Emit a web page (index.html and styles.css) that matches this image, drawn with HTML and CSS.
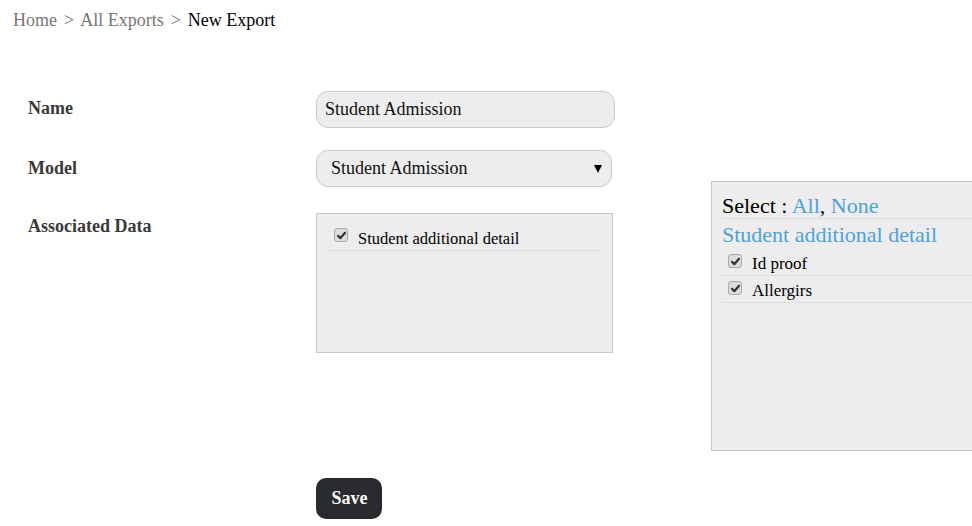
FILE: index.html
```html
<!DOCTYPE html>
<html lang="en">
<head>
<meta charset="utf-8">
<title>New Export</title>
<link rel="stylesheet" href="styles.css">
</head>
<body>
<div class="page">
  <nav class="breadcrumb">
    <a href="#" class="crumb-link">Home</a> <span class="sep">&gt;</span>
    <a href="#" class="crumb-link">All Exports</a> <span class="sep">&gt;</span>
    <span class="crumb-current">New Export</span>
  </nav>
  <div class="layout">
    <form class="export-form">
      <label class="field-label row-name" for="name">Name</label>
      <div class="field row-name">
        <input id="name" class="text-input" type="text" value="Student Admission">
      </div>

      <label class="field-label row-model" for="model">Model</label>
      <div class="field row-model">
        <span class="select-wrap">
          <select id="model" class="select-input">
            <option>Student Admission</option>
          </select>
        </span>
      </div>

      <span class="field-label row-assoc">Associated Data</span>
      <div class="field row-assoc">
        <div class="assoc-box">
          <div class="check-item">
            <span class="checkbox"><svg viewBox="0 0 13 13" width="13" height="13"><path d="M3 6.8 L5.3 9.2 L10 3.8" fill="none" stroke="#333" stroke-width="2.2" stroke-linecap="round" stroke-linejoin="round"/></svg></span>
            <span class="check-text">Student additional detail</span>
          </div>
        </div>
      </div>

      <div class="field row-save">
        <button type="button" class="save-btn">Save</button>
      </div>
    </form>

    <aside class="fields-panel">
      <div class="select-line">Select : <a href="#" class="blue-link">All</a>, <a href="#" class="blue-link">None</a></div>
      <div class="group-title">Student additional detail</div>
      <div class="panel-item first">
        <span class="checkbox"><svg viewBox="0 0 13 13" width="13" height="13"><path d="M3 6.8 L5.3 9.2 L10 3.8" fill="none" stroke="#333" stroke-width="2.2" stroke-linecap="round" stroke-linejoin="round"/></svg></span>
        <span class="check-text">Id proof</span>
      </div>
      <div class="panel-item">
        <span class="checkbox"><svg viewBox="0 0 13 13" width="13" height="13"><path d="M3 6.8 L5.3 9.2 L10 3.8" fill="none" stroke="#333" stroke-width="2.2" stroke-linecap="round" stroke-linejoin="round"/></svg></span>
        <span class="check-text">Allergirs</span>
      </div>
    </aside>
  </div>
</div>
</body>
</html>
```

FILE: styles.css
```css
html, body {
  margin: 0;
  padding: 0;
  background: #fff;
}

body {
  font-family: "Liberation Serif", "Times New Roman", serif;
  color: #000;
}

.page {
  width: 972px;
  height: 526px;
  overflow: hidden;
}

.breadcrumb {
  padding: 10px 13px 0;
  height: 31px;
  font-size: 18px;
  line-height: 21px;
  color: #777;
}

.crumb-link {
  color: #777;
  text-decoration: none;
}

.sep {
  color: #777;
  margin: 0 2.5px;
}

.crumb-current {
  color: #000;
}

.layout {
  display: flex;
  align-items: flex-start;
}

.export-form {
  width: 683px;
  flex: none;
  padding: 50px 0 0 28px;
  display: grid;
  grid-template-columns: 288px 300px;
  align-items: center;
}

.field-label {
  font-weight: bold;
  font-size: 18px;
  color: #3a3a3a;
  grid-column: 1;
}

.field {
  grid-column: 2;
}

.row-name.field-label { padding-bottom: 3px; }

.row-model { margin-top: 22px; }

.row-assoc { margin-top: 26px; }

.row-assoc.field-label {
  align-self: start;
  padding-top: 3px;
}

.row-save {
  margin-top: 125px;
}

.text-input {
  box-sizing: border-box;
  width: 299px;
  height: 37px;
  border: 1px solid #ccc;
  border-radius: 12px;
  background: #ededed;
  font-family: "Liberation Serif", "Times New Roman", serif;
  font-size: 18px;
  color: #111;
  padding: 0 8px;
  margin: 0;
  outline: none;
}

.select-wrap {
  position: relative;
  display: inline-block;
}

.select-wrap::after {
  content: "";
  position: absolute;
  right: 10px;
  top: 15px;
  border-left: 4px solid transparent;
  border-right: 4px solid transparent;
  border-top: 8px solid #000;
  pointer-events: none;
}

.select-input {
  -webkit-appearance: none;
  appearance: none;
  box-sizing: border-box;
  width: 296px;
  height: 37px;
  border: 1px solid #ccc;
  border-radius: 12px;
  background: #ededed;
  font-family: "Liberation Serif", "Times New Roman", serif;
  font-size: 18px;
  color: #111;
  padding: 0 14px 2px;
  margin: 0;
  outline: none;
}

.assoc-box {
  box-sizing: border-box;
  width: 297px;
  height: 140px;
  border: 1px solid #c8c8c8;
  background: #ededed;
  padding: 0 11px 0 10px;
}

.check-item {
  display: flex;
  align-items: center;
  padding: 14px 0 0 7px;
  height: 22px;
  border-bottom: 1px solid #dcdcdc;
}

.checkbox {
  box-sizing: border-box;
  width: 14px;
  height: 14px;
  flex: none;
  border: 1px solid #a9a9a9;
  border-radius: 3px;
  background: #dcdcdc;
  display: inline-flex;
  align-items: center;
  justify-content: center;
  margin-right: 10px;
}

.checkbox svg {
  display: block;
  margin: -1px;
}

.check-text {
  font-size: 17px;
  line-height: 20px;
  color: #000;
}

.check-item .check-text {
  font-size: 16.5px;
}

.check-item .checkbox {
  margin-top: -8px;
}

.save-btn {
  width: 66px;
  height: 41px;
  border: none;
  border-radius: 10px;
  background: #2a2b2e;
  color: #fff;
  font-family: "Liberation Serif", "Times New Roman", serif;
  font-weight: bold;
  font-size: 18px;
  padding: 0 0 0 1px;
  margin: 0;
  cursor: pointer;
}

.fields-panel {
  box-sizing: border-box;
  flex: none;
  width: 300px;
  height: 270px;
  margin-top: 140px;
  border: 1px solid #c8c8c8;
  background: #ededed;
  padding: 11px 0 0 10px;
}

.select-line {
  font-size: 22px;
  line-height: 25px;
  height: 25px;
  border-bottom: 1px solid #dcdcdc;
}

.blue-link {
  color: #4aa3df;
  text-decoration: none;
}

.group-title {
  font-size: 22px;
  line-height: 26px;
  padding-top: 3px;
  color: #4aa3df;
}

.panel-item {
  display: flex;
  align-items: center;
  box-sizing: border-box;
  height: 27px;
  padding: 4px 0 0 6px;
  border-bottom: 1px solid #dcdcdc;
}

.panel-item.first {
  height: 28px;
  padding-top: 5px;
}

.panel-item .checkbox {
  margin-top: -6px;
}
```
